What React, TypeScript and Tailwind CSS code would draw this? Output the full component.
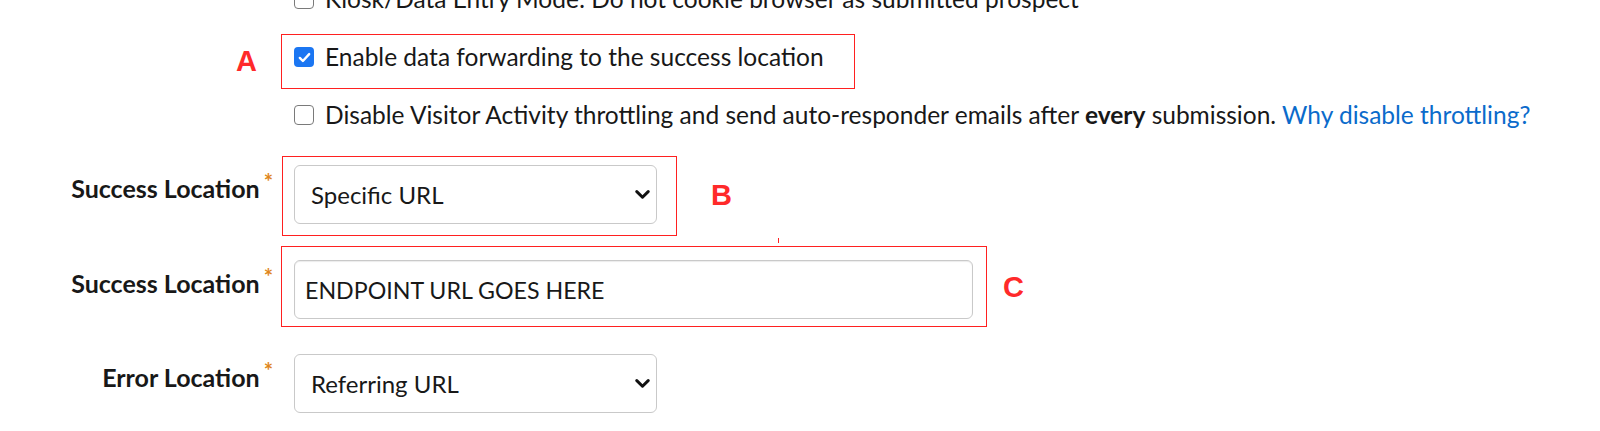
import React from "react";

// Form settings excerpt with red annotation boxes
const Checkbox = ({ checked }: { checked?: boolean }) =>
  checked ? (
    <span className="flex h-5 w-5 shrink-0 items-center justify-center rounded-[4px] bg-[#1b76f2]">
      <svg viewBox="0 0 20 20" className="h-[17px] w-[17px]">
        <path d="M4.5 10.5l3.6 3.6L15.5 6" fill="none" stroke="white" strokeWidth="2.8" strokeLinecap="round" strokeLinejoin="round" />
      </svg>
    </span>
  ) : (
    <span className="h-5 w-5 shrink-0 rounded-[4px] border-[1.5px] border-[#7a7a7a] bg-white" />
  );

const CheckRow = ({ checked, children }: { checked?: boolean; children: React.ReactNode }) => (
  <div className="flex h-[58px] items-center">
    <Checkbox checked={checked} />
    <span className="ml-[11px] whitespace-nowrap text-[24.5px] leading-[30px]">{children}</span>
  </div>
);

const Chevron = () => (
  <svg viewBox="0 0 15 9" className="h-[9px] w-[15px]">
    <path d="M1.8 1.6L7.5 7.2 13.2 1.6" fill="none" stroke="#111" strokeWidth="3" strokeLinecap="round" strokeLinejoin="round" />
  </svg>
);

const Field = ({ label, className, children }: { label: string; className?: string; children: React.ReactNode }) => (
  <div className={`flex items-start ${className ?? ""}`}>
    <div className="flex w-[294px] items-start justify-end pr-[21px] pt-[8px]">
      <span className="whitespace-nowrap text-[25px] font-bold leading-[30px]">{label}</span>
      <span className="ml-[4px] -mt-[2px] text-[22px] font-bold leading-none text-[#e0861b]">*</span>
    </div>
    {children}
  </div>
);

const Select = ({ value }: { value: string }) => (
  <div className="flex h-[59px] w-[363px] items-center justify-between rounded-[6px] border border-[#c9c9c9] bg-white pl-[16px] pr-[6px]">
    <span className="leading-[30px]">{value}</span>
    <Chevron />
  </div>
);

export default function App() {
  return (
    <div className="relative h-[431px] w-[1600px] overflow-hidden bg-white font-['Lato',sans-serif] text-[24px] text-[#181818]">
      <div className="-mt-[30px] flex flex-col pl-[294px]">
        <CheckRow>Kiosk/Data Entry Mode: Do not cookie browser as submitted prospect</CheckRow>
        <CheckRow checked>Enable data forwarding to the success location</CheckRow>
        <CheckRow>
          Disable Visitor Activity throttling and send auto-responder emails after <b className="font-bold">every</b> submission.{" "}
          <a className="text-[#0b6bcb]">Why disable throttling?</a>
        </CheckRow>
      </div>

      <div className="mt-[21px] flex flex-col">
        <Field label="Success Location">
          <Select value="Specific URL" />
        </Field>
        <Field label="Success Location" className="mt-[36px]">
          <input
            readOnly
            value="ENDPOINT URL GOES HERE"
            className="h-[59px] w-[679px] rounded-[6px] border border-[#c9c9c9] bg-white px-[10px] text-[23.2px] leading-[30px] text-[#181818] shadow-[inset_0_1px_1px_rgba(0,0,0,0.08)] outline-none"
          />
        </Field>
        <Field label="Error Location" className="mt-[35px]">
          <Select value="Referring URL" />
        </Field>
      </div>

      {/* annotation overlays */}
      <div className="pointer-events-none absolute left-[281px] top-[34px] h-[55px] w-[574px] border border-[#ff2020]" />
      <div className="pointer-events-none absolute left-[282px] top-[156px] h-[80px] w-[395px] border border-[#ff2020]" />
      <div className="pointer-events-none absolute left-[281px] top-[246px] h-[81px] w-[706px] border border-[#ff2020]" />
      <div className="pointer-events-none absolute left-[778px] top-[238px] h-[5px] w-px bg-[#ff2020]" />
      <span className="absolute left-[236px] top-[47px] font-['Liberation_Sans',Arial,sans-serif] text-[29px] font-bold leading-none text-[#ff2a2a]">A</span>
      <span className="absolute left-[711px] top-[181px] font-['Liberation_Sans',Arial,sans-serif] text-[29px] font-bold leading-none text-[#ff2a2a]">B</span>
      <span className="absolute left-[1003px] top-[273px] font-['Liberation_Sans',Arial,sans-serif] text-[29px] font-bold leading-none text-[#ff2a2a]">C</span>
    </div>
  );
}
